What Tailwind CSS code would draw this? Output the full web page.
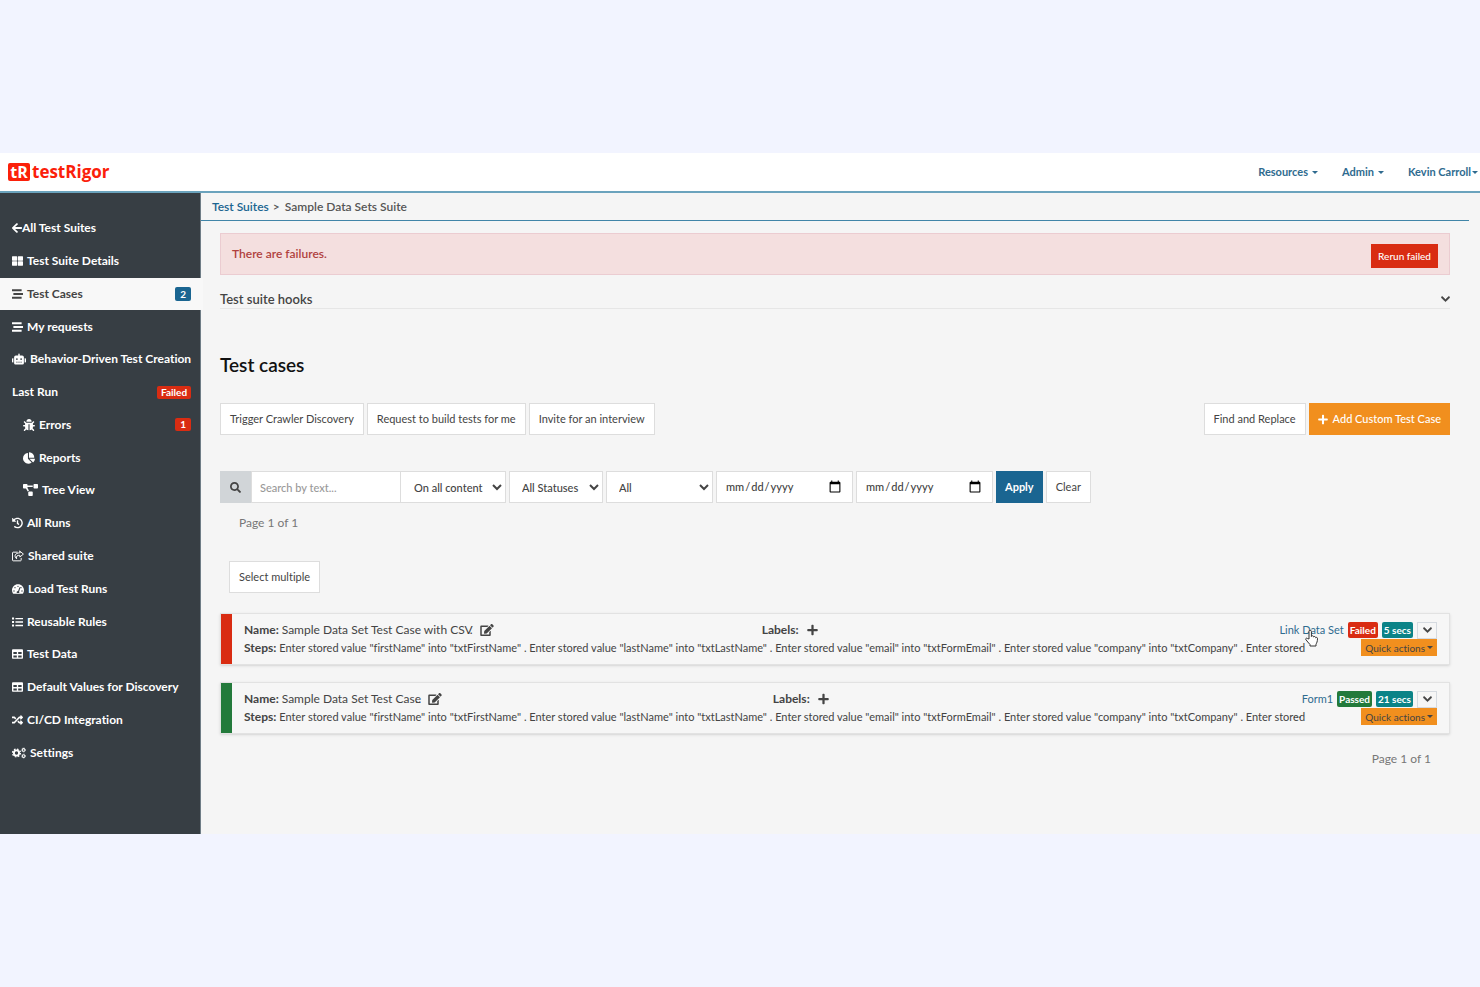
<!DOCTYPE html>
<html lang="en">

<head>
    <meta charset="UTF-8">
    <meta name="viewport" content="width=device-width, initial-scale=1.0">
    <title>testRigor - Test Cases</title>
    <script src="https://cdn.jsdelivr.net/npm/@tailwindcss/browser@4"></script>
</head>

<body class="min-h-screen bg-[#f2f4ff] py-[153px] font-['Lato',sans-serif] text-[12px] leading-[18px] text-[#444] [font-variant-ligatures:none]">
    <!-- Icon sprite -->
    <svg class="hidden">
        <symbol id="arrow-left" viewBox="0 0 448 512"><path d="M257.5 445.1l-22.2 22.2c-9.4 9.4-24.6 9.4-33.9 0L7 273c-9.4-9.4-9.4-24.6 0-33.9L201.4 44.7c9.4-9.4 24.6-9.4 33.9 0l22.2 22.2c9.5 9.5 9.3 25-.4 34.3L136.6 216H424c13.3 0 24 10.7 24 24v32c0 13.3-10.7 24-24 24H136.6l120.5 114.8c9.8 9.3 10 24.8.4 34.3z" /></symbol>
        <symbol id="th-large" viewBox="0 0 512 512"><path d="M296 32h192c13.3 0 24 10.7 24 24v160c0 13.3-10.7 24-24 24H296c-13.3 0-24-10.7-24-24V56c0-13.3 10.7-24 24-24zm-80 0H24C10.7 32 0 42.7 0 56v160c0 13.3 10.7 24 24 24h192c13.3 0 24-10.7 24-24V56c0-13.3-10.7-24-24-24zM0 296v160c0 13.3 10.7 24 24 24h192c13.3 0 24-10.7 24-24V296c0-13.3-10.7-24-24-24H24c-13.3 0-24 10.7-24 24zm296 184h192c13.3 0 24-10.7 24-24V296c0-13.3-10.7-24-24-24H296c-13.3 0-24 10.7-24 24v160c0 13.3 10.7 24 24 24z" /></symbol>
        <symbol id="stream" viewBox="0 0 512 512"><path d="M16 128h416c8.8 0 16-7.2 16-16V48c0-8.8-7.2-16-16-16H16C7.200 32 0 39.200 0 48v64c0 8.800 7.200 16 16 16zm480 80H80c-8.800 0-16 7.200-16 16v64c0 8.800 7.200 16 16 16h416c8.800 0 16-7.200 16-16v-64c0-8.800-7.200-16-16-16zm-64 176H16c-8.800 0-16 7.200-16 16v64c0 8.800 7.200 16 16 16h416c8.800 0 16-7.200 16-16v-64c0-8.800-7.200-16-16-16z" /></symbol>
        <symbol id="robot" viewBox="0 0 640 512"><path d="M32 224H64V416H32A32 32 0 0 1 0 384V256A32 32 0 0 1 32 224Zm512-48V448a64 64 0 0 1-64 64H160a64 64 0 0 1-64-64V176a80 80 0 0 1 80-80H288V32a32 32 0 0 1 64 0V96H464A80 80 0 0 1 544 176ZM264 256a40 40 0 1 0-40 40A40 40 0 0 0 264 256Zm-8 128H192v32h64Zm96 0H288v32h64ZM456 256a40 40 0 1 0-40 40A40 40 0 0 0 456 256Zm-8 128H384v32h64ZM640 256V384a32 32 0 0 1-32 32H576V224h32A32 32 0 0 1 640 256Z" /></symbol>
        <symbol id="bug" viewBox="0 0 512 512"><path d="M512 288.900c-.5 17.400-15.200 31.100-32.700 31.100H424v16c0 21.900-4.900 42.600-13.600 61.100l60.200 60.300c12.500 12.500 12.500 32.700 0 45.200-12.500 12.500-32.700 12.500-45.200 0l-54.800-54.700C345.900 468 314.400 480 280 480V236c0-6.600-5.400-12-12-12h-24c-6.600 0-12 5.400-12 12v244c-34.400 0-65.900-12-90.600-32.100l-54.800 54.700c-12.500 12.500-32.700 12.500-45.200 0-12.500-12.500-12.500-32.700 0-45.200l60.200-60.300C92.900 378.600 88 357.900 88 336v-16H32.700C15.200 320 .5 306.300 0 288.900-.5 270.800 13.500 256 31.400 256H88v-58.700l-46.600-46.700c-12.500-12.500-12.500-32.700 0-45.200 12.500-12.500 32.700-12.500 45.200 0L141.300 160h229.400l54.700-54.600c12.500-12.500 32.700-12.500 45.200 0 12.500 12.500 12.500 32.700 0 45.200L424 197.300V256h56.600c18 0 31.900 14.800 31.400 32.900zM257 0c-61.900 0-112 50.100-112 112h224C369 50.100 318.900 0 257 0z" /></symbol>
        <symbol id="chart-pie" viewBox="0 0 544 512"><path d="M527.800 288H290.500l158 158c6 6 16 6.500 22.200.7 38.700-36.500 65.300-85.600 73.100-140.900 1.400-9.400-6.500-17.800-16-17.800zm-15.800-64.800C503.700 103.700 408.300 8.300 288.800 0 279.700-.6 272 7.100 272 16.200V240h223.800c9.100 0 16.800-7.700 16.200-16.800zM224 288V50.700c0-9.500-8.400-17.400-17.800-16C87 51.500-4.100 155.600.1 280.400 4.500 408.500 114.800 513.600 243 512c50.400-.6 97-16.900 135.300-44 7.900-5.600 8.400-17.300 1.600-24.100L224 288z" /></symbol>
        <symbol id="diagram" viewBox="0 0 640 512"><path d="M384 320H256c-17.700 0-32 14.300-32 32v128c0 17.700 14.300 32 32 32h128c17.700 0 32-14.300 32-32V352c0-17.700-14.300-32-32-32zM192 32c0-17.700-14.300-32-32-32H32C14.300 0 0 14.300 0 32v128c0 17.700 14.300 32 32 32h95.700l73.200 128C212 301 232.400 288 256 288h.3L192 175.500V128h224V64H192V32zM608 0H480c-17.700 0-32 14.300-32 32v128c0 17.700 14.300 32 32 32h128c17.700 0 32-14.300 32-32V32c0-17.700-14.300-32-32-32z" /></symbol>
        <symbol id="history" viewBox="0 0 512 512"><path d="M504 255.500c.3 136.700-111.200 248.400-247.800 248.500-59 0-113.200-20.500-155.800-54.900-11.100-9-11.900-25.600-1.900-35.600l11.300-11.300c8.600-8.600 22.400-9.600 31.900-2C173.100 425.100 212.800 440 256 440c101.700 0 184-82.300 184-184 0-101.700-82.300-184-184-184-48.800 0-93.100 19-126.100 49.900l50.800 50.800c10.100 10.100 2.900 27.300-11.300 27.300H24c-8.800 0-16-7.200-16-16V38.600c0-14.200 17.200-21.400 27.300-11.300l49.400 49.400C129.200 34.100 189.600 8 256 8c136.800 0 247.700 110.800 248 247.500zm-180.900 78.800l9.800-12.600c8.100-10.500 6.300-25.600-4.200-33.700L288 256.300V152c0-13.300-10.700-24-24-24h-16c-13.300 0-24 10.700-24 24v135.700l65.400 50.800c10.500 8.200 25.600 6.300 33.700-4.200z" /></symbol>
        <symbol id="share" viewBox="0 0 576 512"><path fill="none" stroke="currentColor" stroke-width="46" stroke-linejoin="round" stroke-linecap="round" d="M255 72H55c-18 0-31 13-31 31v354c0 18 13 31 31 31h354c18 0 31-13 31-31v-90M376 24l172 140-172 140v-82c-122 0-192 30-152 170-140-120-96-280 152-290z" /></symbol>
        <symbol id="gauge" viewBox="0 0 576 512"><path fill-rule="evenodd" d="M288 32C129 32 0 161 0 320c0 53 14 102 39 145 6 9 16 15 27 15h444c11 0 21-6 27-15 25-43 39-92 39-145C576 161 447 32 288 32zm0 64a32 32 0 1 1 0 64 32 32 0 0 1 0-64zM96 384a32 32 0 1 1 0-64 32 32 0 0 1 0 64zm48-160a32 32 0 1 1 0-64 32 32 0 0 1 0 64zm247-46c8 3 13 12 10 20l-61 184c7 10 12 21 12 34 0 12-3 23-9 32H233c-6-9-9-20-9-32 0-34 27-62 61-64h9l61-163c3-9 27-14 36-11zm41 46a32 32 0 1 1 0-64 32 32 0 0 1 0 64zm48 160a32 32 0 1 1 0-64 32 32 0 0 1 0 64z" /></symbol>
        <symbol id="list" viewBox="0 0 512 512"><path d="M0 48h96v96H0zM0 208h96v96H0zM0 368h96v96H0zM160 64h352v64H160zM160 224h352v64H160zM160 384h352v64H160z" /></symbol>
        <symbol id="table" viewBox="0 0 512 512"><path d="M464 32H48C21.500 32 0 53.500 0 80v352c0 26.500 21.500 48 48 48h416c26.500 0 48-21.500 48-48V80c0-26.500-21.500-48-48-48zM224 416H64v-96h160v96zm0-160H64v-96h160v96zm224 160H288v-96h160v96zm0-160H288v-96h160v96z" /></symbol>
        <symbol id="random" viewBox="0 0 512 512"><path d="M505 359c9.400 9.400 9.400 24.600 0 34l-80 80c-15 15-41 4.500-41-17V416h-58.800a12 12 0 0 1-8.800-3.800l-70.500-75.600 53.300-57.100L352 336h32v-40c0-21.400 25.900-32 41-17l80 80zM12 176h84l52.800 56.600 53.300-57.200-70.500-75.600A12 12 0 0 0 122.800 96H12c-6.600 0-12 5.400-12 12v56c0 6.600 5.400 12 12 12zm372 0v40c0 21.500 26 32 41 17l80-80c9.400-9.400 9.400-24.600 0-34l-80-80c-15-15-41-4.400-41 17V96h-58.800a12 12 0 0 0-8.800 3.800L96 336H12c-6.600 0-12 5.400-12 12v56c0 6.600 5.400 12 12 12h110.800c3.300 0 6.500-1.400 8.800-3.800L352 176h32z" /></symbol>
        <symbol id="cogs" viewBox="0 0 640 512">
            <g fill="none" stroke="currentColor">
                <circle cx="205" cy="256" r="118" stroke-width="86" />
                <circle cx="205" cy="256" r="180" stroke-width="60" stroke-dasharray="76 65.400" />
                <circle cx="530" cy="118" r="62" stroke-width="46" />
                <circle cx="530" cy="118" r="95" stroke-width="26" stroke-dasharray="50 49.500" />
                <circle cx="530" cy="394" r="62" stroke-width="46" />
                <circle cx="530" cy="394" r="95" stroke-width="26" stroke-dasharray="50 49.500" />
            </g>
        </symbol>
        <symbol id="search" viewBox="0 0 512 512"><path d="M505 442.700L405.300 343c-4.500-4.500-10.600-7-17-7H372c27.600-35.300 44-79.700 44-128C416 93.100 322.900 0 208 0S0 93.100 0 208s93.100 208 208 208c48.300 0 92.700-16.400 128-44v16.300c0 6.400 2.500 12.500 7 17l99.700 99.700c9.400 9.400 24.600 9.400 33.900 0l28.300-28.300c9.400-9.400 9.400-24.600.1-34zM208 336c-70.700 0-128-57.200-128-128 0-70.700 57.200-128 128-128 70.700 0 128 57.200 128 128 0 70.700-57.200 128-128 128z" /></symbol>
        <symbol id="plus" viewBox="0 0 448 512"><path d="M416 208H272V64c0-17.700-14.300-32-32-32h-32c-17.700 0-32 14.300-32 32v144H32c-17.700 0-32 14.300-32 32v32c0 17.700 14.300 32 32 32h144v144c0 17.700 14.300 32 32 32h32c17.700 0 32-14.300 32-32V304h144c17.700 0 32-14.300 32-32v-32c0-17.700-14.300-32-32-32z" /></symbol>
        <symbol id="chevron-down" viewBox="0 0 448 512"><path stroke="currentColor" stroke-width="24" d="M207 381.500L12.700 187.100c-9.400-9.400-9.400-24.600 0-33.900l22.700-22.700c9.400-9.400 24.500-9.400 33.900 0L224 284.500l154.700-154c9.400-9.400 24.600-9.400 33.900 0l22.700 22.700c9.400 9.400 9.400 24.600 0 33.900L241 381.500c-9.400 9.400-24.600 9.400-34 0z" /></symbol>
        <symbol id="edit" viewBox="0 0 576 512"><path d="M402.600 83.200l90.200 90.200c3.800 3.800 3.800 10 0 13.800L274.400 405.600l-92.800 10.300c-12.400 1.400-22.900-9.100-21.500-21.500l10.300-92.800L388.800 83.200c3.800-3.800 10-3.800 13.800 0zm162-22.900l-48.800-48.800c-15.200-15.200-39.900-15.200-55.200 0l-35.400 35.400c-3.800 3.800-3.800 10 0 13.800l90.200 90.200c3.800 3.800 10 3.800 13.800 0l35.400-35.400c15.200-15.300 15.200-40 0-55.200zM384 346.200V448H64V128h229.800c3.200 0 6.200-1.300 8.500-3.500l40-40c7.600-7.600 2.200-20.500-8.500-20.500H48C21.500 64 0 85.500 0 112v352c0 26.500 21.500 48 48 48h352c26.500 0 48-21.500 48-48V306.200c0-10.700-12.900-16-20.500-8.500l-40 40c-2.200 2.300-3.500 5.300-3.500 8.500z" /></symbol>
        <symbol id="caret" viewBox="0 0 8 4"><path d="M0 0h8L4 4z" /></symbol>
    </svg>

    <header class="flex h-10 items-center justify-between border-b-2 border-[#6ba3bd] bg-white pl-2 pr-[2px]">
        <a href="#" class="flex items-center gap-[2px] font-['Open_Sans',sans-serif] text-[17px] font-bold text-[#fb200a]">
            <span class="flex h-[18px] w-[22px] items-center justify-center rounded-[2px] bg-[#fb200a] text-[16px] text-white">tR</span>
            <span>testRigor</span>
        </a>
        <nav class="flex gap-6 text-[11px] font-bold text-[#2f6b8f]">
            <a href="#" class="flex items-center gap-1">Resources <svg class="h-[3px] w-[6px] fill-current"><use href="#caret" /></svg></a>
            <a href="#" class="flex items-center gap-1">Admin <svg class="h-[3px] w-[6px] fill-current"><use href="#caret" /></svg></a>
            <a href="#" class="flex items-center gap-px">Kevin Carroll <svg class="h-[3px] w-[6px] fill-current"><use href="#caret" /></svg></a>
        </nav>
    </header>

    <div class="flex bg-[#f5f5f5]">
        <aside class="w-[201px] shrink-0 border-r border-[#6f7d86] bg-[#373e44] pb-[65px] pt-[19px] font-bold text-white">
            <nav class="grid h-[557px] auto-rows-fr">
                <a href="#" class="flex items-center px-3"><svg class="h-3 w-[10px] fill-current"><use href="#arrow-left" /></svg>All Test Suites</a>
                <a href="#" class="flex items-center gap-1 px-3"><svg class="h-3 w-[11px] fill-current"><use href="#th-large" /></svg>Test Suite Details</a>
                <a href="#" class="flex items-center gap-1 bg-[#f8f8f8] px-3 text-[#444]"><svg class="h-3 w-[11px] fill-current"><use href="#stream" /></svg>Test Cases
                    <span class="ml-auto rounded-[2px] bg-[#1a6591] px-[5px] text-[10px] leading-[14px] text-white">2</span></a>
                <a href="#" class="flex items-center gap-1 px-3"><svg class="h-3 w-[11px] fill-current"><use href="#stream" /></svg>My requests</a>
                <a href="#" class="flex items-center gap-1 whitespace-nowrap px-3"><svg class="h-3 w-[14px] fill-current"><use href="#robot" /></svg>Behavior-Driven Test Creation</a>
                <a href="#" class="flex items-center px-3">Last Run
                    <span class="ml-auto rounded-[2px] bg-[#d92c12] px-1 text-[10px] leading-[13px]">Failed</span></a>
                <a href="#" class="flex items-center gap-1 pl-[23px] pr-3"><svg class="h-3 w-3 fill-current"><use href="#bug" /></svg>Errors
                    <span class="ml-auto rounded-[2px] bg-[#d92c12] px-[5px] text-[10px] leading-[13px]">1</span></a>
                <a href="#" class="flex items-center gap-1 pl-[23px] pr-3"><svg class="h-3 w-3 fill-current"><use href="#chart-pie" /></svg>Reports</a>
                <a href="#" class="flex items-center gap-1 pl-[23px] pr-3"><svg class="h-3 w-[15px] fill-current"><use href="#diagram" /></svg>Tree View</a>
                <a href="#" class="flex items-center gap-1 px-3"><svg class="h-3 w-[11px] fill-current"><use href="#history" /></svg>All Runs</a>
                <a href="#" class="flex items-center gap-1 px-3"><svg class="h-3 w-3 fill-current"><use href="#share" /></svg>Shared suite</a>
                <a href="#" class="flex items-center gap-1 px-3"><svg class="h-3 w-3 fill-current"><use href="#gauge" /></svg>Load Test Runs</a>
                <a href="#" class="flex items-center gap-1 px-3"><svg class="h-3 w-[11px] fill-current"><use href="#list" /></svg>Reusable Rules</a>
                <a href="#" class="flex items-center gap-1 px-3"><svg class="h-3 w-[11px] fill-current"><use href="#table" /></svg>Test Data</a>
                <a href="#" class="flex items-center gap-1 px-3"><svg class="h-3 w-[11px] fill-current"><use href="#table" /></svg>Default Values for Discovery</a>
                <a href="#" class="flex items-center gap-1 px-3"><svg class="h-3 w-[11px] fill-current"><use href="#random" /></svg>CI/CD Integration</a>
                <a href="#" class="flex items-center gap-1 px-3"><svg class="h-3 w-[14px] fill-current"><use href="#cogs" /></svg>Settings</a>
            </nav>
        </aside>

        <div class="min-w-0 flex-1">
            <div class="mr-[11px] flex h-[28px] items-center gap-1 border-b border-[#4085a8] pl-[11px] font-semibold text-[#555]">
                <a href="#" class="text-[#1a6591]">Test Suites</a>
                <span>&gt;</span>
                <span class="ml-px">Sample Data Sets Suite</span>
            </div>

            <main class="pl-[19px] pr-[30px] pt-3">
                <div class="flex h-[42px] items-center justify-between border border-[#ebccd1] bg-[#f4dfdf] px-[11px] font-semibold text-[#b0413e]">
                    <p>There are failures.</p>
                    <button class="mt-1 h-6 bg-[#d92c12] px-[7px] text-[10px] font-medium text-white">Rerun failed</button>
                </div>

                <div class="mt-[14px] flex h-5 items-center justify-between border-b border-[#e6e6e6] text-[13px] font-semibold">
                    <h2>Test suite hooks</h2>
                    <button aria-label="Expand test suite hooks"><svg class="h-[10px] w-[9px] fill-current"><use href="#chevron-down" /></svg></button>
                </div>

                <h1 class="mt-[43px] text-[19px] font-semibold leading-[26px] text-[#111]">Test cases</h1>

                <div class="mt-[25px] flex gap-[3px] text-[11px]">
                    <button class="h-8 border border-[#ddd] bg-white px-[9px]">Trigger Crawler Discovery</button>
                    <button class="h-8 border border-[#ddd] bg-white px-[9px]">Request to build tests for me</button>
                    <button class="h-8 border border-[#ddd] bg-white px-[9px]">Invite for an interview</button>
                    <button class="ml-auto h-8 border border-[#ddd] bg-white px-[9px]">Find and Replace</button>
                    <button class="flex h-8 items-center gap-[5px] bg-[#f18f1e] px-[9px] font-medium text-white"><svg class="h-[11px] w-[10px] fill-current"><use href="#plus" /></svg>Add Custom Test Case</button>
                </div>

                <form class="mt-9 flex gap-[3px] text-[11px] font-medium">
                    <div class="flex">
                        <label for="search" class="flex w-[31px] items-center justify-center bg-[#d1d5d8]"><svg class="h-[11px] w-[11px] fill-current"><use href="#search" /></svg></label>
                        <input id="search" type="text" placeholder="Search by text..." class="h-8 w-[150px] border border-[#ddd] bg-white px-2 placeholder:text-[#999]">
                        <select aria-label="Search scope" class="h-8 w-[105px] border border-l-0 border-[#ddd] bg-white pl-[9px]">
                            <option>On all content</option>
                        </select>
                    </div>
                    <select aria-label="Status" class="h-8 w-[94px] border border-[#ddd] bg-white pl-2">
                        <option>All Statuses</option>
                    </select>
                    <select aria-label="Label" class="h-8 w-[107px] border border-[#ddd] bg-white pl-2">
                        <option>All</option>
                    </select>
                    <input type="date" aria-label="From date" class="h-8 w-[137px] border border-[#ddd] bg-white px-2 [&::-webkit-calendar-picker-indicator]:size-[14px]">
                    <input type="date" aria-label="To date" class="h-8 w-[137px] border border-[#ddd] bg-white px-2 [&::-webkit-calendar-picker-indicator]:size-[14px]">
                    <button type="button" class="h-8 bg-[#1a6591] px-[9px] font-bold text-white">Apply</button>
                    <button type="button" class="h-8 border border-[#ddd] bg-white px-[9px] font-normal">Clear</button>
                </form>

                <p class="ml-[19px] mt-[11px] text-[#777]">Page 1 of 1</p>

                <button class="ml-[9px] mt-[29px] block h-8 border border-[#ddd] bg-white px-[9px] text-[11px]">Select multiple</button>

                <section class="mt-5 flex flex-col gap-[17px]">
                    <article class="flex border border-[#e2e2e2] bg-[#f6f6f6] shadow-sm">
                        <div class="w-[11px] shrink-0 bg-[#d92c12]"></div>
                        <div class="min-w-0 flex-1 px-3 py-[7px]">
                            <div class="flex h-[18px]">
                                <div class="grid flex-1 grid-cols-2">
                                    <div class="flex items-center">
                                        <b class="mr-[3px]">Name:</b>
                                        <span class="relative">Sample Data Set Test Case with CSV<span class="absolute bottom-0 right-0">..</span></span>
                                        <button aria-label="Edit name" class="ml-[7px]"><svg class="h-3 w-[14px] fill-current"><use href="#edit" /></svg></button>
                                    </div>
                                    <div class="flex items-center">
                                        <b class="mr-2">Labels:</b>
                                        <button aria-label="Add label"><svg class="h-3 w-[11px] fill-current"><use href="#plus" /></svg></button>
                                    </div>
                                </div>
                                <div class="flex items-center gap-1">
                                    <a href="#" class="relative text-[11px] text-[#2f6b8f]">Link Data Set
                                        <svg class="absolute left-[26px] top-2 h-[18px] w-[13px]" viewBox="0 0 13 18"><path fill="#fff" stroke="#333" stroke-linejoin="round" d="M4 10V2.500a1.200 1.200 0 0 1 2.400 0V7.500a1.200 1.200 0 0 1 2.200 0V8a1.200 1.200 0 0 1 2 .3v.5a1.100 1.100 0 0 1 1.900.4c0 3.500-.8 4.800-1.500 6V17H5v-1.500C3.500 14 2 12 .8 10.500c-.5-1.300 1-1.700 1.800-.9z" /></svg>
                                    </a>
                                    <span class="rounded-[2px] bg-[#d92c12] px-[2px] text-[10px] font-bold leading-4 text-white">Failed</span>
                                    <span class="rounded-[2px] bg-[#0b8387] px-[2px] text-[10px] font-bold leading-4 text-white">5 secs</span>
                                    <button aria-label="Expand test case" class="flex h-[17px] w-5 items-center justify-center border border-[#d5dae0]"><svg class="h-[10px] w-[9px] fill-current"><use href="#chevron-down" /></svg></button>
                                </div>
                            </div>
                            <div class="flex h-[18px] gap-[7px]">
                                <p class="flex min-w-0 flex-1 gap-[3px] whitespace-nowrap"><b>Steps:</b> <span class="text-[11px]">Enter stored value "firstName" into "txtFirstName" . Enter stored value "lastName" into "txtLastName" . Enter stored value "email" into "txtFormEmail" . Enter stored value "company" into "txtCompany" . Enter <span class="relative">stored<span class="absolute bottom-0 right-1">...</span></span></span></p>
                                <button class="flex h-[17px] items-center gap-[2px] bg-[#f18f1e] px-1 text-[10px]">Quick actions <svg class="h-[3px] w-[6px] fill-current"><use href="#caret" /></svg></button>
                            </div>
                        </div>
                    </article>

                    <article class="flex border border-[#e2e2e2] bg-[#f6f6f6] shadow-sm">
                        <div class="w-[11px] shrink-0 bg-[#237a3b]"></div>
                        <div class="min-w-0 flex-1 px-3 py-[7px]">
                            <div class="flex h-[18px]">
                                <div class="grid flex-1 grid-cols-2">
                                    <div class="flex items-center">
                                        <b class="mr-[3px]">Name:</b>
                                        <span class="relative">Sample Data Set Test Case<span class="absolute bottom-0 right-0">..</span></span>
                                        <button aria-label="Edit name" class="ml-[7px]"><svg class="h-3 w-[14px] fill-current"><use href="#edit" /></svg></button>
                                    </div>
                                    <div class="flex items-center">
                                        <b class="mr-2">Labels:</b>
                                        <button aria-label="Add label"><svg class="h-3 w-[11px] fill-current"><use href="#plus" /></svg></button>
                                    </div>
                                </div>
                                <div class="flex items-center gap-1">
                                    <a href="#" class="text-[11px] text-[#2f6b8f]">Form1</a>
                                    <span class="rounded-[2px] bg-[#237a3b] px-[2px] text-[10px] font-bold leading-4 text-white">Passed</span>
                                    <span class="rounded-[2px] bg-[#0b8387] px-[2px] text-[10px] font-bold leading-4 text-white">21 secs</span>
                                    <button aria-label="Expand test case" class="flex h-[17px] w-5 items-center justify-center border border-[#d5dae0]"><svg class="h-[10px] w-[9px] fill-current"><use href="#chevron-down" /></svg></button>
                                </div>
                            </div>
                            <div class="flex h-[18px] gap-[7px]">
                                <p class="flex min-w-0 flex-1 gap-[3px] whitespace-nowrap"><b>Steps:</b> <span class="text-[11px]">Enter stored value "firstName" into "txtFirstName" . Enter stored value "lastName" into "txtLastName" . Enter stored value "email" into "txtFormEmail" . Enter stored value "company" into "txtCompany" . Enter <span class="relative">stored<span class="absolute bottom-0 right-1">...</span></span></span></p>
                                <button class="flex h-[17px] items-center gap-[2px] bg-[#f18f1e] px-1 text-[10px]">Quick actions <svg class="h-[3px] w-[6px] fill-current"><use href="#caret" /></svg></button>
                            </div>
                        </div>
                    </article>
                </section>

                <p class="mr-[19px] mt-4 text-right text-[#777]">Page 1 of 1</p>
            </main>
        </div>
    </div>
</body>

</html>
